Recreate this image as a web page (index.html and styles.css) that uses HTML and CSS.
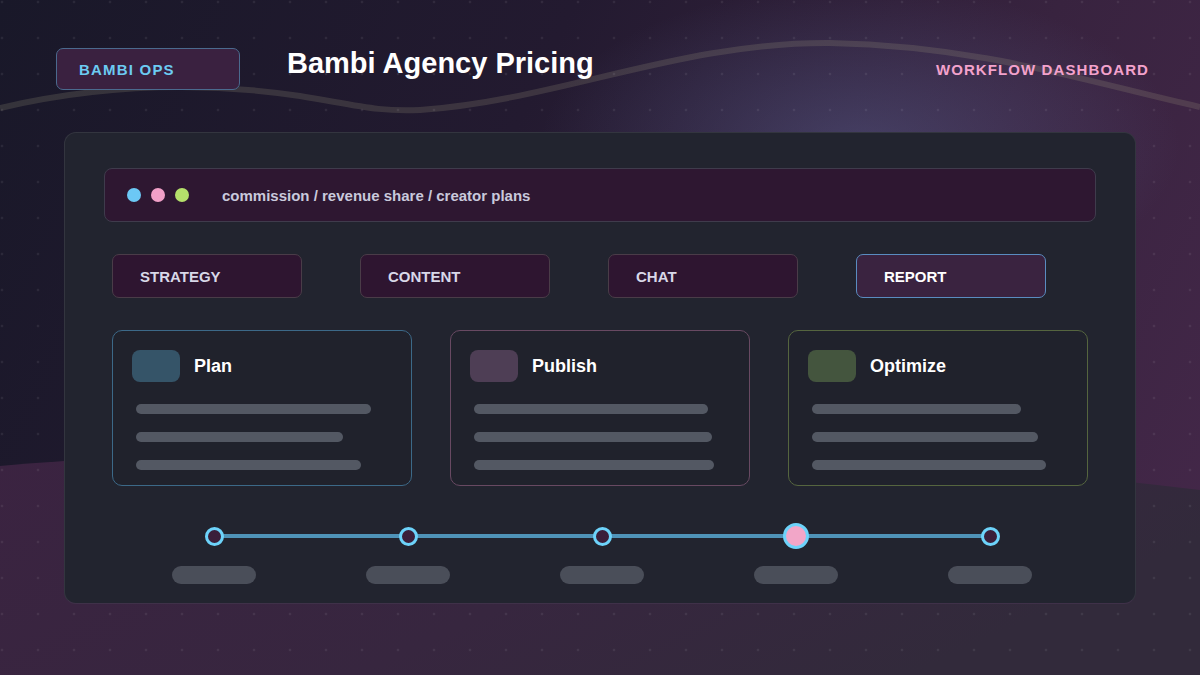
FILE: index.html
```html
<!DOCTYPE html>
<html>

<head>
    <link rel="stylesheet" href="styles.css">
</head>

<body>
    <div class="backdrop">
        <svg viewBox="0 0 1200 675" width="1200" height="675">
            <defs>
                <linearGradient id="hill" x1="0" y1="0" x2="1" y2="0.4">
                    <stop offset="0" stop-color="#3b2341" />
                    <stop offset="0.6" stop-color="#37263f" />
                    <stop offset="1" stop-color="#322a3b" />
                </linearGradient>
                <pattern id="dots" width="36" height="36" patternUnits="userSpaceOnUse">
                    <circle cx="2" cy="2" r="1.3" fill="rgba(255,255,255,0.07)" />
                </pattern>
            </defs>
            <path class="hill" d="M0 466 C 300 440, 800 440, 1200 490 L1200 675 L0 675 Z" />
            <path class="wave" d="M0 108 C 120 80, 220 84, 300 96 C 360 106, 380 112, 420 110 C 560 100, 680 42, 830 43 C 980 46, 1080 80, 1200 107" />
            <rect width="1200" height="675" fill="url(#dots)" />
        </svg>
    </div>

    <div class="page">
        <header class="topbar">
            <div class="brand">BAMBI OPS</div>
            <h1 class="title">Bambi Agency Pricing</h1>
            <div class="tagline">WORKFLOW DASHBOARD</div>
        </header>

        <main class="panel">
            <div class="addr">
                <div class="dots">
                    <span class="dot blue"></span>
                    <span class="dot pink"></span>
                    <span class="dot green"></span>
                </div>
                <span class="addr-text">commission / revenue share / creator plans</span>
            </div>

            <nav class="tabs">
                <div class="tab">STRATEGY</div>
                <div class="tab">CONTENT</div>
                <div class="tab">CHAT</div>
                <div class="tab active">REPORT</div>
            </nav>

            <section class="cards">
                <div class="card plan">
                    <div class="card-head">
                        <span class="card-icon"></span>
                        <span class="card-title">Plan</span>
                    </div>
                    <div class="lines">
                        <span class="line" style="width: 235px"></span>
                        <span class="line" style="width: 207px"></span>
                        <span class="line" style="width: 225px"></span>
                    </div>
                </div>
                <div class="card publish">
                    <div class="card-head">
                        <span class="card-icon"></span>
                        <span class="card-title">Publish</span>
                    </div>
                    <div class="lines">
                        <span class="line" style="width: 234px"></span>
                        <span class="line" style="width: 238px"></span>
                        <span class="line" style="width: 240px"></span>
                    </div>
                </div>
                <div class="card optimize">
                    <div class="card-head">
                        <span class="card-icon"></span>
                        <span class="card-title">Optimize</span>
                    </div>
                    <div class="lines">
                        <span class="line" style="width: 209px"></span>
                        <span class="line" style="width: 226px"></span>
                        <span class="line" style="width: 234px"></span>
                    </div>
                </div>
            </section>

            <section class="timeline">
                <div class="step"><span class="node"></span><span class="label"></span></div>
                <div class="step"><span class="node"></span><span class="label"></span></div>
                <div class="step"><span class="node"></span><span class="label"></span></div>
                <div class="step"><span class="node current"></span><span class="label"></span></div>
                <div class="step"><span class="node"></span><span class="label"></span></div>
            </section>
        </main>
    </div>
</body>

</html>
```

FILE: styles.css
```css
body {
    margin: 0;
    width: 1200px;
    height: 675px;
    overflow: hidden;
    position: relative;
    font-family: "Liberation Sans", Arial, sans-serif;
    background:
        radial-gradient(ellipse 320px 160px at 860px 145px, rgba(95, 105, 155, 0.42), transparent 100%),
        linear-gradient(115deg, #191829 0%, #231a30 38%, #38233f 70%, #45284a 100%);
}

.backdrop {
    position: absolute;
    top: 0;
    left: 0;
    width: 1200px;
    height: 675px;
}

.backdrop svg {
    display: block;
}

.hill {
    fill: url(#hill);
}

.wave {
    fill: none;
    stroke: rgba(165, 160, 130, 0.2);
    stroke-width: 6;
}

.page {
    position: relative;
    z-index: 1;
    padding: 48px 51px 0 56px;
}

/* header */

.topbar {
    display: flex;
    align-items: center;
    height: 42px;
}

.brand {
    box-sizing: border-box;
    width: 184px;
    height: 42px;
    display: flex;
    align-items: center;
    padding-left: 22px;
    background: #3a2140;
    border: 1px solid #4b6a8e;
    border-radius: 7px;
    color: #6ccbf2;
    font-size: 15px;
    font-weight: bold;
    letter-spacing: 1.2px;
}

.title {
    align-self: flex-start;
    margin: 0 0 0 47px;
    font-size: 29px;
    line-height: 30px;
    font-weight: bold;
    color: #ffffff;
}

.tagline {
    margin-left: auto;
    color: #f3a2cc;
    font-size: 15px;
    font-weight: bold;
    letter-spacing: 1.1px;
}

/* main panel */

.panel {
    display: block;
    box-sizing: border-box;
    width: 1072px;
    margin: 42px 0 0 8px;
    padding: 35px 39px 19px;
    background: #22242f;
    border: 1px solid rgba(255, 255, 255, 0.08);
    border-bottom-color: rgba(150, 90, 150, 0.25);
    border-radius: 12px;
}

.addr {
    display: flex;
    align-items: center;
    box-sizing: border-box;
    height: 54px;
    padding-left: 22px;
    background: #2e1731;
    border: 1px solid #3f3b4c;
    border-radius: 8px;
}

.dots {
    display: flex;
    gap: 10px;
}

.dot {
    width: 14px;
    height: 14px;
    border-radius: 50%;
}

.dot.blue {
    background: #6cc8f5;
}

.dot.pink {
    background: #f2a0c8;
}

.dot.green {
    background: #b5e06b;
}

.addr-text {
    margin-left: 33px;
    color: #c9c9dc;
    font-size: 15px;
    font-weight: bold;
}

.tabs {
    display: flex;
    gap: 58px;
    margin: 32px 8px 0;
}

.tab {
    box-sizing: border-box;
    width: 190px;
    height: 44px;
    display: flex;
    align-items: center;
    padding-left: 27px;
    background: #2e1530;
    border: 1px solid #4a3c48;
    border-radius: 7px;
    color: #d8d8e8;
    font-size: 15px;
    font-weight: bold;
}

.tab.active {
    background: #3a2340;
    border-color: #5a8cc0;
    color: #ffffff;
}

/* cards */

.cards {
    display: flex;
    gap: 38px;
    margin: 32px 8px 0;
}

.card {
    box-sizing: border-box;
    width: 300px;
    height: 156px;
    padding: 19px 0 0 19px;
    background: #20222c;
    border: 1px solid;
    border-radius: 10px;
}

.card.plan {
    border-color: #3c6988;
}

.card.publish {
    border-color: #684962;
}

.card.optimize {
    border-color: #55653f;
}

.card-head {
    display: flex;
    align-items: center;
    gap: 14px;
}

.card-icon {
    width: 48px;
    height: 32px;
    border-radius: 8px;
}

.plan .card-icon {
    background: #355468;
}

.publish .card-icon {
    background: #4e3e55;
}

.optimize .card-icon {
    background: #44553e;
}

.card-title {
    color: #ffffff;
    font-size: 18px;
    font-weight: bold;
}

.lines {
    display: flex;
    flex-direction: column;
    gap: 18px;
    margin: 22px 0 0 4px;
}

.line {
    display: block;
    height: 10px;
    border-radius: 5px;
    background: #535863;
}

/* timeline */

.timeline {
    position: relative;
    display: grid;
    grid-template-columns: repeat(5, 1fr);
    width: 970px;
    margin: 37px 0 0 13px;
}

.timeline::before {
    content: "";
    position: absolute;
    left: 97px;
    right: 97px;
    top: 11px;
    height: 4px;
    background: #4f93b8;
}

.step {
    position: relative;
    display: flex;
    flex-direction: column;
    align-items: center;
}

.node {
    box-sizing: border-box;
    width: 19px;
    height: 19px;
    margin: 3.5px 0;
    border: 3px solid #6dd3fa;
    border-radius: 50%;
    background: #3a1f3a;
}

.node.current {
    width: 26px;
    height: 26px;
    margin: 0;
    background: #f2a6c8;
}

.label {
    width: 84px;
    height: 18px;
    margin-top: 17px;
    border-radius: 9px;
    background: #4a4e59;
}
```
